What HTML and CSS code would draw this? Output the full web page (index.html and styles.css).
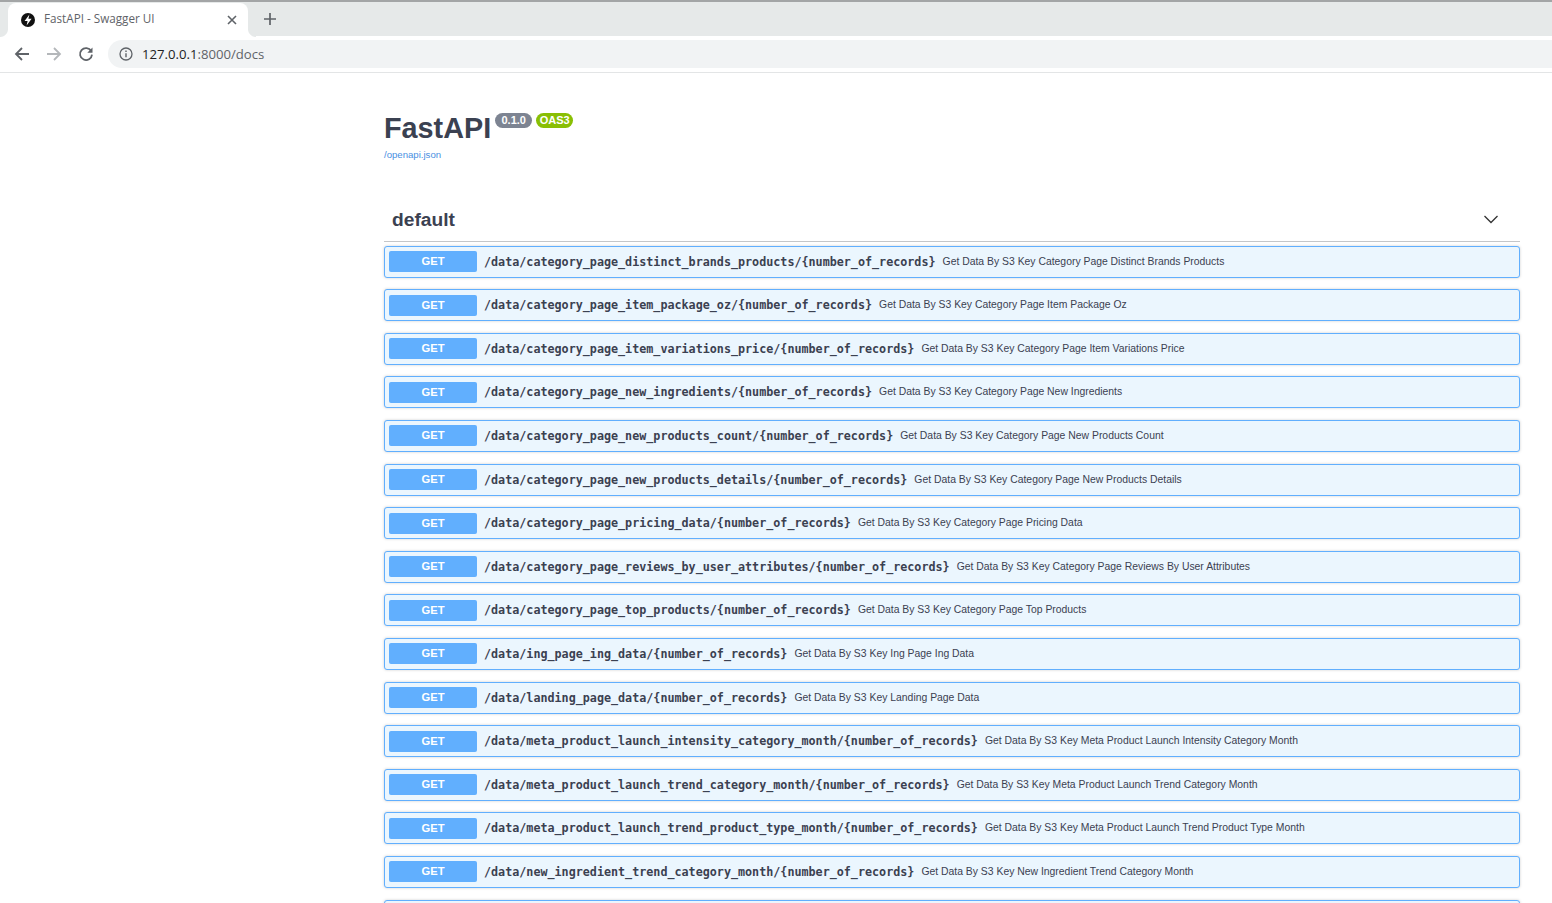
FILE: index.html
```html
<!DOCTYPE html>
<html lang="en">
<head>
    <meta charset="UTF-8">
    <title>FastAPI - Swagger UI</title>
    <link rel="stylesheet" href="styles.css">
</head>
<body>
<header class="browser">
    <div class="tabstrip">
        <div class="tab">
            <svg class="favicon" width="14" height="14" viewBox="0 0 14 14"><circle cx="7" cy="7" r="7" fill="#111"/><path d="M8.4 1.6 3.6 8h3L5.6 12.4 10.6 5.8H7.4z" fill="#fff"/></svg>
            <span class="tab-title">FastAPI - Swagger UI</span>
            <svg class="tab-close" width="10" height="10" viewBox="0 0 10 10"><path d="M1 1l8 8M9 1l-8 8" stroke="#5f6368" stroke-width="1.6"/></svg>
        </div>
        <svg class="new-tab" width="12" height="12" viewBox="0 0 12 12"><path d="M6 0v12M0 6h12" stroke="#5f6368" stroke-width="1.7"/></svg>
    </div>
    <div class="toolbar">
        <svg class="nav-icon" width="16" height="16" viewBox="0 0 16 16"><path d="M15 8H2M8 2 2 8l6 6" fill="none" stroke="#5f6368" stroke-width="1.8"/></svg>
        <svg class="nav-icon" width="16" height="16" viewBox="0 0 16 16"><path d="M1 8h13M8 2l6 6-6 6" fill="none" stroke="#b4b7ba" stroke-width="1.8"/></svg>
        <svg class="nav-icon" width="16" height="16" viewBox="0 0 16 16"><path d="M13.2 5A6 6 0 1 0 14 8.6" fill="none" stroke="#5f6368" stroke-width="1.8"/><path d="M14.5 1.5v5.2H9.3z" fill="#5f6368"/></svg>
        <div class="omnibox">
            <svg width="14" height="14" viewBox="0 0 14 14"><circle cx="7" cy="7" r="6" fill="none" stroke="#5f6368" stroke-width="1.3"/><path d="M7 6.2v4M7 3.6v1.5" stroke="#5f6368" stroke-width="1.4"/></svg>
            <span class="url"><b>127.0.0.1</b>:8000/docs</span>
        </div>
    </div>
</header>

<main class="swagger">
    <div class="info">
        <div class="title-line">
            <h1>FastAPI</h1>
            <span class="badge version">0.1.0</span>
            <span class="badge oas">OAS3</span>
        </div>
        <a class="spec-link" href="#">/openapi.json</a>
    </div>

    <div class="section-head">
        <h2>default</h2>
        <svg width="16" height="9" viewBox="0 0 16 9"><path d="M1.5 1 8 7.5 14.5 1" fill="none" stroke="#333" stroke-width="1.3"/></svg>
    </div>

    <div class="opblock"><span class="method">GET</span><span class="path">/data/category_page_distinct_brands_products/{number_of_records}</span><span class="summary">Get Data By S3 Key Category Page Distinct Brands Products</span></div>
    <div class="opblock"><span class="method">GET</span><span class="path">/data/category_page_item_package_oz/{number_of_records}</span><span class="summary">Get Data By S3 Key Category Page Item Package Oz</span></div>
    <div class="opblock"><span class="method">GET</span><span class="path">/data/category_page_item_variations_price/{number_of_records}</span><span class="summary">Get Data By S3 Key Category Page Item Variations Price</span></div>
    <div class="opblock"><span class="method">GET</span><span class="path">/data/category_page_new_ingredients/{number_of_records}</span><span class="summary">Get Data By S3 Key Category Page New Ingredients</span></div>
    <div class="opblock"><span class="method">GET</span><span class="path">/data/category_page_new_products_count/{number_of_records}</span><span class="summary">Get Data By S3 Key Category Page New Products Count</span></div>
    <div class="opblock"><span class="method">GET</span><span class="path">/data/category_page_new_products_details/{number_of_records}</span><span class="summary">Get Data By S3 Key Category Page New Products Details</span></div>
    <div class="opblock"><span class="method">GET</span><span class="path">/data/category_page_pricing_data/{number_of_records}</span><span class="summary">Get Data By S3 Key Category Page Pricing Data</span></div>
    <div class="opblock"><span class="method">GET</span><span class="path">/data/category_page_reviews_by_user_attributes/{number_of_records}</span><span class="summary">Get Data By S3 Key Category Page Reviews By User Attributes</span></div>
    <div class="opblock"><span class="method">GET</span><span class="path">/data/category_page_top_products/{number_of_records}</span><span class="summary">Get Data By S3 Key Category Page Top Products</span></div>
    <div class="opblock"><span class="method">GET</span><span class="path">/data/ing_page_ing_data/{number_of_records}</span><span class="summary">Get Data By S3 Key Ing Page Ing Data</span></div>
    <div class="opblock"><span class="method">GET</span><span class="path">/data/landing_page_data/{number_of_records}</span><span class="summary">Get Data By S3 Key Landing Page Data</span></div>
    <div class="opblock"><span class="method">GET</span><span class="path">/data/meta_product_launch_intensity_category_month/{number_of_records}</span><span class="summary">Get Data By S3 Key Meta Product Launch Intensity Category Month</span></div>
    <div class="opblock"><span class="method">GET</span><span class="path">/data/meta_product_launch_trend_category_month/{number_of_records}</span><span class="summary">Get Data By S3 Key Meta Product Launch Trend Category Month</span></div>
    <div class="opblock"><span class="method">GET</span><span class="path">/data/meta_product_launch_trend_product_type_month/{number_of_records}</span><span class="summary">Get Data By S3 Key Meta Product Launch Trend Product Type Month</span></div>
    <div class="opblock"><span class="method">GET</span><span class="path">/data/new_ingredient_trend_category_month/{number_of_records}</span><span class="summary">Get Data By S3 Key New Ingredient Trend Category Month</span></div>
    <div class="opblock"></div>
</main>
</body>
</html>
```

FILE: styles.css
```css
* {
    box-sizing: border-box;
}

html,
body {
    height: 903px;
    overflow: hidden;
}

body {
    margin: 0;
    background: #fff;
    font-family: "Liberation Sans", Arial, sans-serif;
    color: #3b4151;
}

/* Browser chrome */
.browser {
    height: 73px;
    border-top: 2px solid #a3a5a6;
    border-bottom: 1px solid #e3e5e6;
}

.tabstrip {
    height: 34px;
    display: flex;
    align-items: center;
    background: #e6e9e9;
    padding-left: 8px;
}

.tab {
    position: relative;
    width: 240px;
    height: 34px;
    margin-top: 1px;
    display: flex;
    align-items: center;
    padding: 0 11px 0 13px;
    background: #fff;
    border-radius: 8px 8px 0 0;
}

/* curved feet of the active tab */
.tab::before,
.tab::after {
    content: "";
    position: absolute;
    bottom: 0;
    width: 8px;
    height: 8px;
}

.tab::before {
    left: -8px;
    background: radial-gradient(circle at 0 0, #e6e9e9 7.5px, #fff 8.5px);
}

.tab::after {
    right: -8px;
    background: radial-gradient(circle at 100% 0, #e6e9e9 7.5px, #fff 8.5px);
}

.tab-title {
    flex: 1;
    margin: 0 0 3px 9px;
    font-family: "Open Sans", sans-serif;
    font-size: 11.7px;
    color: #5f6368;
}

.new-tab {
    margin-left: 16px;
}

.toolbar {
    height: 36px;
    display: flex;
    align-items: center;
    padding-left: 14px;
    gap: 16px;
    background: #fff;
}

.omnibox {
    flex: 1;
    height: 28px;
    margin-left: -2px;
    display: flex;
    align-items: center;
    gap: 9px;
    padding-left: 11px;
    background: #f1f3f4;
    border-radius: 14px 0 0 14px;
}

.url {
    font-family: "Open Sans", sans-serif;
    font-size: 13.15px;
    color: #5f6368;
}

.url b {
    font-weight: 400;
    color: #202124;
}

/* Swagger page */
.swagger {
    width: 1136px;
    margin-left: 384px;
}

.info {
    height: 126px;
    padding-top: 38px;
}

.title-line {
    display: flex;
    align-items: flex-start;
    height: 33px;
}

h1 {
    margin: 0;
    font-size: 28.8px;
    line-height: 34px;
    font-weight: 700;
    color: #3b4151;
}

.badge {
    width: 37px;
    height: 15px;
    margin-top: 2px;
    border-radius: 8px;
    font-size: 11px;
    line-height: 15px;
    font-weight: 700;
    text-align: center;
    color: #fff;
}

.version {
    margin-left: 4px;
    background: #7d8492;
}

.oas {
    margin-left: 4px;
    background: #89bf04;
}

.spec-link {
    display: block;
    margin-top: 5px;
    font-size: 9.6px;
    color: #4990e2;
    text-decoration: none;
}

.section-head {
    height: 43px;
    margin-bottom: 3.6px;
    display: flex;
    align-items: center;
    justify-content: space-between;
    padding: 0 21px 0 8px;
    border-bottom: 1px solid #c4c6c9;
}

.section-head svg {
    margin-bottom: 2px;
}

h2 {
    margin: 0;
    font-size: 19.2px;
    font-weight: 700;
    color: #3b4151;
}

.opblock {
    height: 32px;
    margin-bottom: 11.6px;
    display: flex;
    align-items: center;
    padding: 0 4px;
    background: #ebf6fe;
    border: 1px solid #61affe;
    border-radius: 3px;
    box-shadow: 0 0 3px rgba(0, 0, 0, 0.19);
}

.method {
    width: 88px;
    height: 21px;
    flex: none;
    border-radius: 2px;
    background: #61affe;
    color: #fff;
    font-size: 11.2px;
    font-weight: 700;
    line-height: 20px;
    text-align: center;
}

.path {
    margin-left: 7px;
    font-family: "DejaVu Sans Mono", monospace;
    font-size: 11.72px;
    font-weight: 600;
    color: #3b4151;
    white-space: nowrap;
}

.summary {
    margin: 0 0 1px 7px;
    font-size: 10.4px;
    color: #3b4151;
    white-space: nowrap;
}
```
